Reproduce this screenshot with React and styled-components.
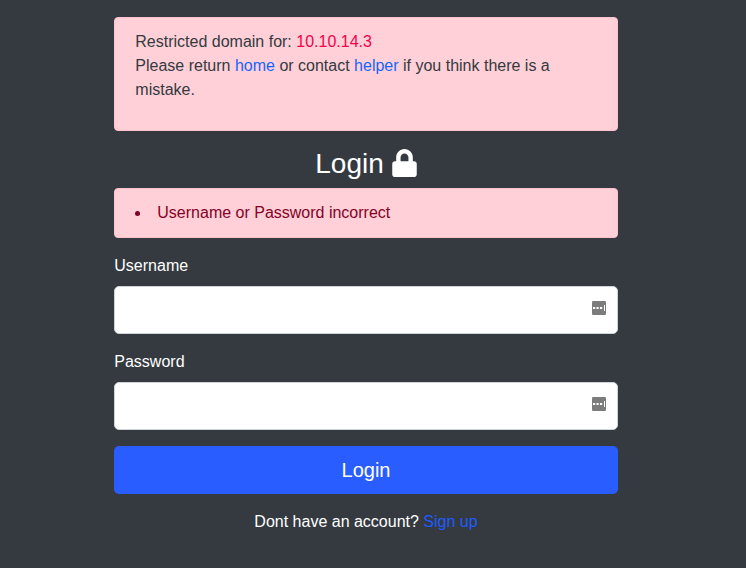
import React from 'react';
import styled, { createGlobalStyle } from 'styled-components';
import { FaLock } from 'react-icons/fa';

const GlobalStyle = createGlobalStyle`
  *, *::before, *::after { box-sizing: border-box; }
  body {
    margin: 0;
    background: #343a40;
    color: #fff;
    font-family: "Liberation Sans", Arial, sans-serif;
    font-size: 16px;
    line-height: 24px;
  }
`;

const Page = styled.main`
  width: 503.4px;
  margin-left: 114.3px;
  padding-top: 17px;
  height: 568px;
`;

const Alert = styled.div`
  padding: 12px 20px;
  border: 1px solid #ffc1cb;
  border-radius: 4px;
  background: #ffd0d8;
  color: ${(p) => (p.$danger ? '#850025' : '#343a40')};
`;

const Notice = styled.p`
  margin: 0 0 16px;
`;

const Address = styled.span`
  color: #f30049;
`;

const Link = styled.a`
  color: ${(p) => (p.$deep ? '#1f5cff' : '#1666ff')};
  text-decoration: none;
`;

const Title = styled.h1`
  display: flex;
  justify-content: center;
  align-items: center;
  gap: 8px;
  margin: 16px 0 8px;
  font-size: 28px;
  font-weight: 400;
  line-height: 33px;
`;

const LockIcon = styled(FaLock)`
  width: 25px;
  height: 28px;
  margin-bottom: 2px;
`;

const Errors = styled.ul`
  margin: 0;
  padding: 0;
  list-style: disc inside;
`;

const Field = styled.div`
  display: flex;
  flex-direction: column;
  gap: 8px;
  margin-top: 16px;
`;

const Label = styled.label``;

const InputFrame = styled.div`
  display: flex;
  align-items: center;
  height: 48px;
  padding: 0 11px 4px 16px;
  border: 1px solid #ced4da;
  border-radius: 5px;
  background: #fff;
`;

const Input = styled.input`
  flex: 1;
  min-width: 0;
  border: 0;
  outline: 0;
  background: transparent;
  font: inherit;
`;

const Submit = styled.button`
  display: block;
  width: 100%;
  height: 48px;
  margin: 16px 0;
  padding: 0;
  border: 0;
  border-radius: 5px;
  background: #295dff;
  color: #fff;
  font: 20px/30px "Liberation Sans", Arial, sans-serif;
`;

const Signup = styled.p`
  margin: 0;
  text-align: center;
`;

function ManagerIcon() {
  return (
    <svg width="14" height="14" viewBox="0 0 14 14" aria-hidden="true">
      <rect width="14" height="14" rx="1.2" fill="#7c7c7c" />
      <g fill="#fff">
        <rect x="1" y="6" width="2.2" height="2" />
        <rect x="4.5" y="6" width="2.2" height="2" />
        <rect x="8" y="6" width="2.2" height="2" />
        <rect x="12" y="4" width="1" height="6" />
      </g>
    </svg>
  );
}

function TextField({ id, label, type }) {
  return (
    <Field>
      <Label htmlFor={id}>{label}</Label>
      <InputFrame>
        <Input id={id} type={type} />
        <ManagerIcon />
      </InputFrame>
    </Field>
  );
}

export default function App() {
  return (
    <>
      <GlobalStyle />
      <Page>
        <Alert>
          <Notice>
            Restricted domain for: <Address>10.10.14.3</Address>
            <br />
            Please return <Link href="#">home</Link> or contact <Link href="#">helper</Link> if you think there is a mistake.
          </Notice>
        </Alert>
        <Title>Login <LockIcon /></Title>
        <Alert $danger>
          <Errors>
            <li>Username or Password incorrect</li>
          </Errors>
        </Alert>
        <TextField id="username" label="Username" type="text" />
        <TextField id="password" label="Password" type="password" />
        <Submit>Login</Submit>
        <Signup>
          Dont have an account? <Link $deep href="#">Sign up</Link>
        </Signup>
      </Page>
    </>
  );
}
